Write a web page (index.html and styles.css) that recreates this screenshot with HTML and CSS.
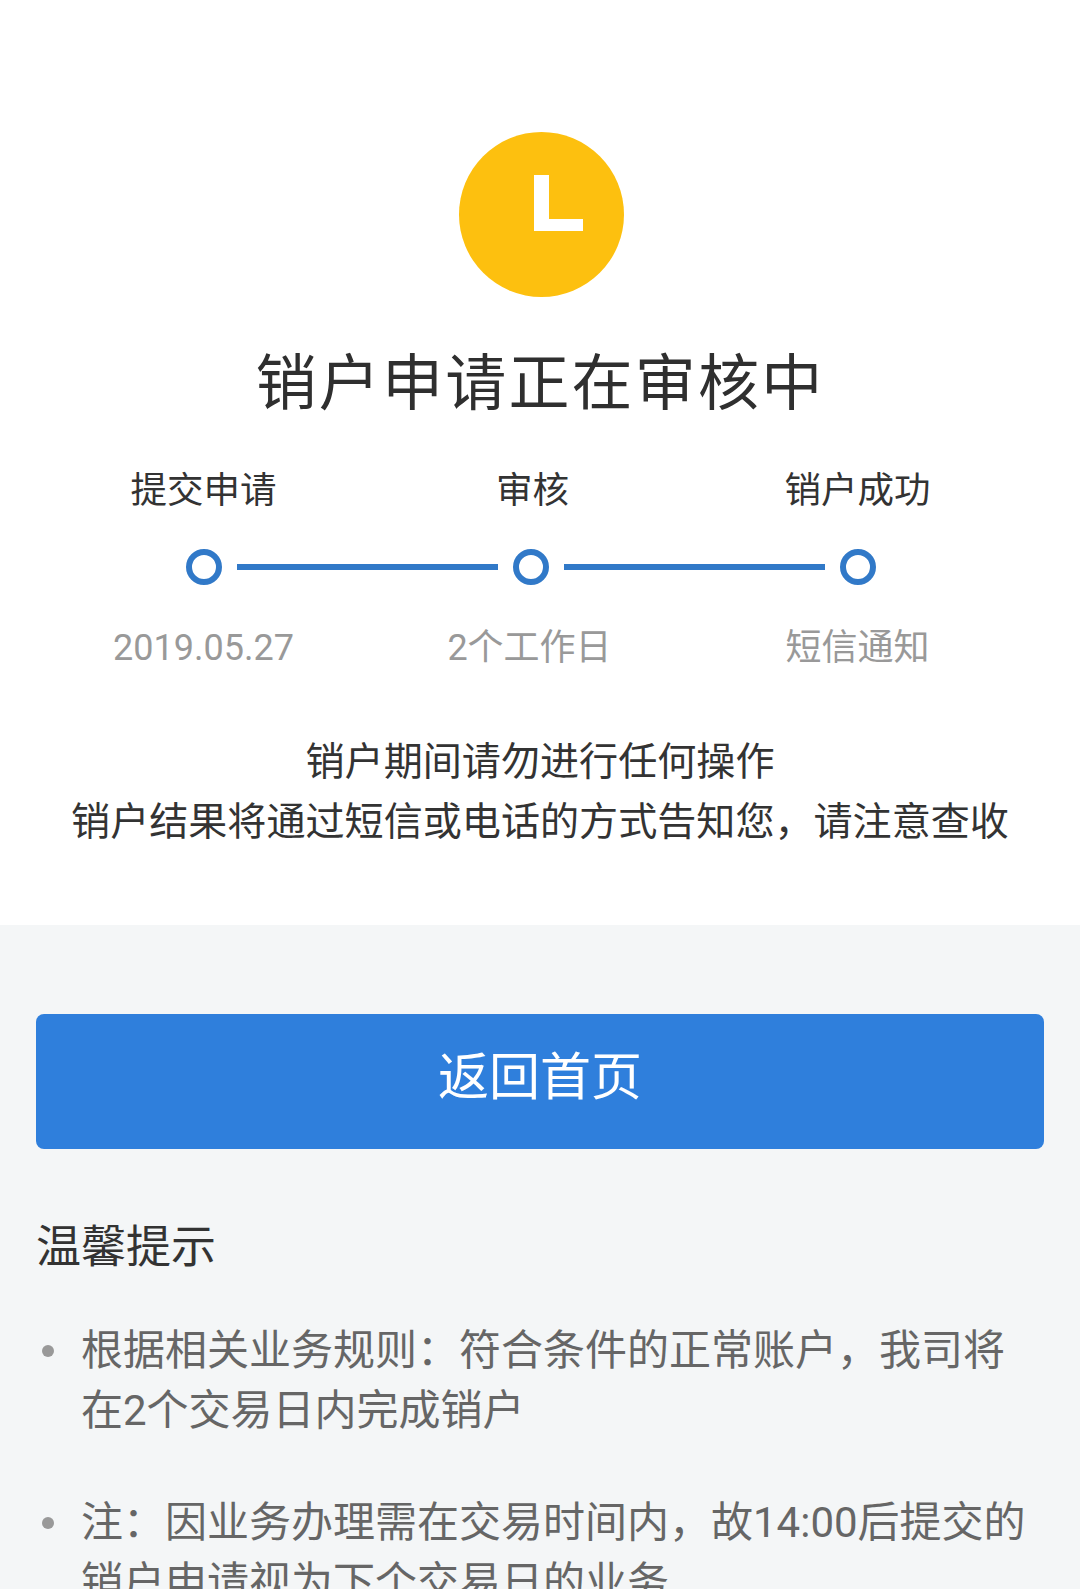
FILE: index.html
```html
<!DOCTYPE html>
<html lang="zh-CN">
<head>
<meta charset="utf-8">
<title>销户申请</title>
<link rel="stylesheet" href="styles.css">
</head>
<body>
<main class="page">
  <section class="status">
    <svg class="status-icon" viewBox="0 0 165 165" aria-hidden="true">
      <circle cx="82.5" cy="82.5" r="82.5" fill="#fdc00f"/>
      <path d="M75 43h15v44h34v12H75z" fill="#fff"/>
    </svg>
    <h1 class="title">销户申请正在审核中</h1>
    <div class="steps">
      <div class="step-row step-labels">
        <span>提交申请</span><span class="label-mid">审核</span><span>销户成功</span>
      </div>
      <div class="track">
        <i class="dot"></i><i class="line"></i><i class="dot"></i><i class="line"></i><i class="dot"></i>
      </div>
      <div class="step-row step-notes">
        <span>2019.05.27</span><span class="note-mid">2个工作日</span><span>短信通知</span>
      </div>
    </div>
    <p class="message">销户期间请勿进行任何操作<br>销户结果将通过短信或电话的方式告知您，请注意查收</p>
  </section>
  <section class="lower">
    <button class="home-btn" type="button">返回首页</button>
    <h2 class="tips-title">温馨提示</h2>
    <ul class="tips">
      <li>根据相关业务规则：符合条件的正常账户，我司将在2个交易日内完成销户</li>
      <li>注：因业务办理需在交易时间内，故14:00后提交的销户申请视为下个交易日的业务</li>
    </ul>
  </section>
</main>
</body>
</html>
```
FILE: styles.css
```css
* { box-sizing: border-box; }
html, body { margin: 0; padding: 0; height: 1589px; overflow: hidden; background: #fff; }
body { font-family: Roboto, "Noto Sans CJK SC", sans-serif; color: #333; }
.page { display: flex; flex-direction: column; height: 1589px; overflow: hidden; }

.status { flex: none; height: 925px; padding-top: 132px; display: flex; flex-direction: column; align-items: center; background: #fff; }
.status-icon { width: 165px; height: 165px; display: block; margin-left: 2px; flex: none; }
.title { margin: 50px 0 0; font-size: 61px; line-height: 74px; font-weight: 400; letter-spacing: 2.2px; color: #2f2f2f; white-space: nowrap; }

.steps { width: 100%; margin-top: 45px; }
.step-row { display: grid; grid-template-columns: 327px 327px 327px; justify-content: center; text-align: center; white-space: nowrap; padding-right: 19px; }
.step-labels { font-size: 36.5px; line-height: 50px; color: #333; }
.step-notes { font-size: 36px; line-height: 50px; color: #999; margin-top: 38px; }
.label-mid { position: relative; left: 2px; }
.note-mid { position: relative; left: -1px; }

.track { display: flex; align-items: center; justify-content: center; margin-top: 33px; padding-right: 19px; }
.dot { width: 36px; height: 36px; border: 6px solid #3179c8; border-radius: 50%; flex: none; }
.line { width: 261px; height: 6px; margin: 0 15px; background: #3179c8; flex: none; }

.message { margin: 59px 0 0; font-size: 39.1px; line-height: 60px; text-align: center; color: #333; white-space: nowrap; }

.lower { flex: 1; background: #f4f6f7; padding: 89px 36px 0; }
.home-btn { display: block; width: 100%; height: 135px; padding: 0 0 18px; border: 0; border-radius: 8px; background: #2f7fdc; color: #fff; font: inherit; font-size: 51px; }
.tips-title { margin: 69px 0 0; font-size: 45px; line-height: 60px; font-weight: 400; color: #333; }
.tips { list-style: none; margin: 43px 0 0; padding: 0; }
.tips li { position: relative; padding-left: 45px; font-size: 42px; line-height: 60px; color: #666; margin-bottom: 52px; }
.tips li::before { content: ""; position: absolute; left: 6px; top: 24px; width: 12px; height: 12px; border-radius: 50%; background: #999; }
```
